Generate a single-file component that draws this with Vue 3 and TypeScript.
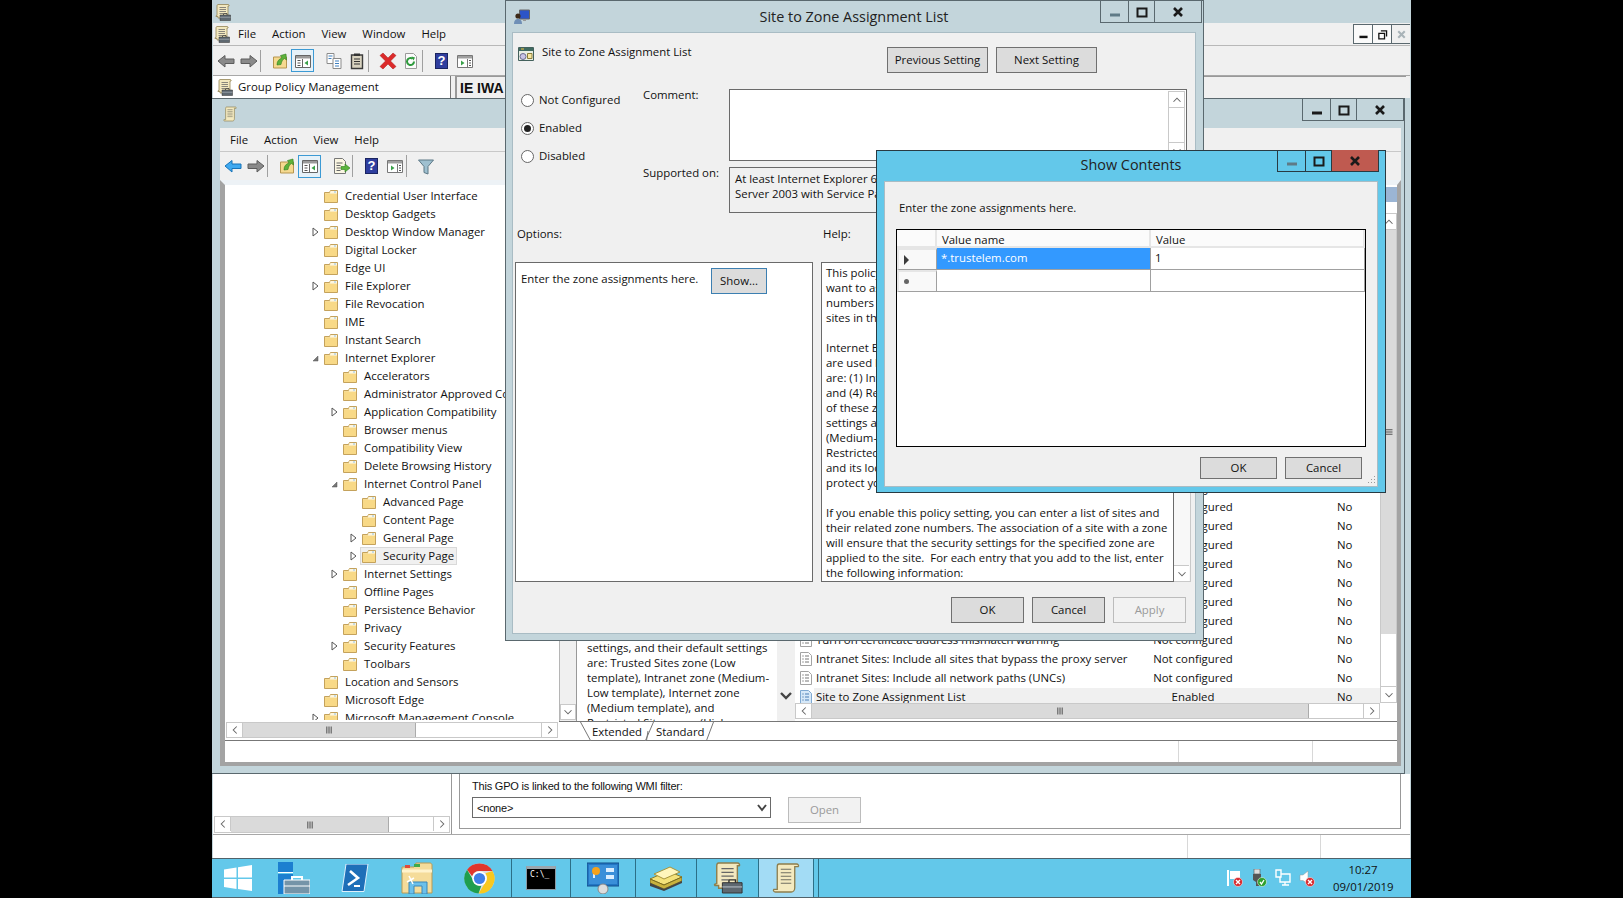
<script setup lang="ts">
interface TreeRow {
  label: string
  level: number
  state?: 'closed' | 'open'
  selected?: boolean
}
interface Tool {
  icon?: string
  on?: boolean
  spaced?: boolean
}
interface ListRow {
  name: string
  state: string
  comment: string
  selected?: boolean
}
interface TaskItem {
  icon: string
  width: number
  framed?: boolean
  active?: boolean
}

const tree: TreeRow[] = [
  { label: 'Credential User Interface', level: 1 },
  { label: 'Desktop Gadgets', level: 1 },
  { label: 'Desktop Window Manager', level: 1, state: 'closed' },
  { label: 'Digital Locker', level: 1 },
  { label: 'Edge UI', level: 1 },
  { label: 'File Explorer', level: 1, state: 'closed' },
  { label: 'File Revocation', level: 1 },
  { label: 'IME', level: 1 },
  { label: 'Instant Search', level: 1 },
  { label: 'Internet Explorer', level: 1, state: 'open' },
  { label: 'Accelerators', level: 2 },
  { label: 'Administrator Approved Controls', level: 2 },
  { label: 'Application Compatibility', level: 2, state: 'closed' },
  { label: 'Browser menus', level: 2 },
  { label: 'Compatibility View', level: 2 },
  { label: 'Delete Browsing History', level: 2 },
  { label: 'Internet Control Panel', level: 2, state: 'open' },
  { label: 'Advanced Page', level: 3 },
  { label: 'Content Page', level: 3 },
  { label: 'General Page', level: 3, state: 'closed' },
  { label: 'Security Page', level: 3, state: 'closed', selected: true },
  { label: 'Internet Settings', level: 2, state: 'closed' },
  { label: 'Offline Pages', level: 2 },
  { label: 'Persistence Behavior', level: 2 },
  { label: 'Privacy', level: 2 },
  { label: 'Security Features', level: 2, state: 'closed' },
  { label: 'Toolbars', level: 2 },
  { label: 'Location and Sensors', level: 1 },
  { label: 'Microsoft Edge', level: 1 },
  { label: 'Microsoft Management Console', level: 1, state: 'closed' },
]

const outerTools: Tool[] = [
  { icon: 'back' }, { icon: 'fwd' }, {},
  { icon: 'up' }, { icon: 'pane', on: true },
  { icon: 'copy', spaced: true }, { icon: 'paste' }, {},
  { icon: 'del' }, { icon: 'refresh' }, {},
  { icon: 'help' }, { icon: 'props' },
]
const editorTools: Tool[] = [
  { icon: 'back-on' }, { icon: 'fwd' }, {},
  { icon: 'up' }, { icon: 'pane', on: true },
  { icon: 'export', spaced: true }, {},
  { icon: 'help' }, { icon: 'props' }, {},
  { icon: 'filter' },
]

const descLines = [
  'settings, and their default settings',
  'are: Trusted Sites zone (Low',
  'template), Intranet zone (Medium-',
  'Low template), Internet zone',
  '(Medium template), and',
  'Restricted Sites zone (High',
]

const helpLines = [
  'This policy setting allows you to manage a list of sites that you',
  'want to associate with a particular security zone. These zone',
  'numbers have associated security settings that apply to all of the',
  'sites in the zone.',
  '',
  'Internet Explorer has 4 security zones, numbered 1-4, and these',
  'are used by this policy setting to associate sites to zones. They',
  'are: (1) Intranet zone, (2) Trusted Sites zone, (3) Internet zone,',
  'and (4) Restricted Sites zone. Security settings can be set for each',
  'of these zones through other policy settings, and their default',
  'settings are: Trusted Sites zone (Low template), Intranet zone',
  '(Medium-Low template), Internet zone (Medium template), and',
  'Restricted Sites zone (High template). (The Local Machine zone',
  'and its locked down equivalent have special security settings that',
  'protect your local computer.)',
  '',
  'If you enable this policy setting, you can enter a list of sites and',
  'their related zone numbers. The association of a site with a zone',
  'will ensure that the security settings for the specified zone are',
  'applied to the site.  For each entry that you add to the list, enter',
  'the following information:',
]

const notConfigured = (name = ''): ListRow => ({ name, state: 'Not configured', comment: 'No' })
const listRows: ListRow[] = [
  ...Array.from({ length: 14 }, () => ({ name: '', state: '', comment: '' })),
  ...Array.from({ length: 8 }, () => notConfigured()),
  notConfigured('Turn on certificate address mismatch warning'),
  notConfigured('Intranet Sites: Include all sites that bypass the proxy server'),
  notConfigured('Intranet Sites: Include all network paths (UNCs)'),
  { name: 'Site to Zone Assignment List', state: 'Enabled', comment: 'No', selected: true },
]

const taskItems: TaskItem[] = [
  { icon: 'start', width: 51 },
  { icon: 'server', width: 61 },
  { icon: 'ps', width: 62 },
  { icon: 'explorer', width: 62 },
  { icon: 'chrome', width: 63 },
  { icon: 'cmd', width: 59, framed: true },
  { icon: 'cpanel', width: 65, framed: true },
  { icon: 'books', width: 61, framed: true },
  { icon: 'gpm', width: 62, framed: true },
  { icon: 'script', width: 56, framed: true, active: true },
]
</script>

<template>
  <svg class="defs" aria-hidden="true">
    <symbol id="chev-l" viewBox="0 0 16 16"><path d="M10 4 6 8l4 4" fill="none" stroke="#666" stroke-width="1.2" /></symbol>
    <symbol id="chev-r" viewBox="0 0 16 16"><path d="m6 4 4 4-4 4" fill="none" stroke="#666" stroke-width="1.2" /></symbol>
    <symbol id="chev-u" viewBox="0 0 16 16"><path d="m4 10 4-4 4 4" fill="none" stroke="#666" stroke-width="1.2" /></symbol>
    <symbol id="chev-d" viewBox="0 0 16 16"><path d="m4 6 4 4 4-4" fill="none" stroke="#666" stroke-width="1.2" /></symbol>
    <symbol id="grip-h" viewBox="0 0 16 16"><path d="M5.500 4v8M8 4v8M10.500 4v8" stroke="#555" stroke-width="1.2" /></symbol>
    <symbol id="grip-v" viewBox="0 0 16 16"><path d="M4 5.500h8M4 8h8M4 10.500h8" stroke="#555" stroke-width="1.2" /></symbol>

    <symbol id="folder" viewBox="0 0 14 13">
      <path d="M.5 2.500h5l1-2h7v12H.5z" fill="#f7dc96" stroke="#c4a25c" />
      <path d="M6.500 1h6.500v2.500H6z" fill="#fdf6e0" />
      <path d="M10 1.600h2v1h-2z" fill="#8fc1e8" />
      <path d="M1 4h12v8H1z" fill="#f8d987" />
    </symbol>
    <symbol id="doc" viewBox="0 0 12 14">
      <path d="M.5.5h8l3 3v10H.5z" fill="#fff" stroke="#a3a3a3" />
      <path d="M2.500 4h1M2.500 7h1M2.500 10h1" stroke="#444" />
      <path d="M5 4h4M5 7h4M5 10h4" stroke="#777" />
    </symbol>
    <symbol id="doc-on" viewBox="0 0 12 14">
      <path d="M.5.5h8l3 3v10H.5z" fill="#d6e8f8" stroke="#7fa9d2" />
      <path d="M2.500 4h1M2.500 7h1M2.500 10h1" stroke="#2a5d94" />
      <path d="M5 4h4M5 7h4M5 10h4" stroke="#4a7fb6" />
    </symbol>

    <symbol id="back" viewBox="0 0 20 20"><path d="M2 10 9 4.500v3.500h9v4.500H9V16z" fill="#8a8a8a" stroke="#5c5c5c" /></symbol>
    <symbol id="back-on" viewBox="0 0 20 20"><path d="M2 10 9 4.500v3.500h9v4.500H9V16z" fill="#3fa9f0" stroke="#1773b8" /></symbol>
    <symbol id="fwd" viewBox="0 0 20 20"><path d="m18 10-7-5.500v3.500H2v4.500h9V16z" fill="#8a8a8a" stroke="#5c5c5c" /></symbol>
    <symbol id="up" viewBox="0 0 20 20">
      <path d="M3.500 6h13v11h-13z" fill="#f6d98f" stroke="#b6954f" />
      <path d="M7 14c0-4 2-6 5-7l-1.500-2.500L16 3l.5 6-2-1.500c-2 1-3 3-3.500 6z" fill="#5fb23a" stroke="#2f7d1f" stroke-width=".6" />
    </symbol>
    <symbol id="pane" viewBox="0 0 20 20">
      <path d="M2.500 4.500h15v12h-15z" fill="#fff" stroke="#666" />
      <path d="M3 5h14v2.500H3z" fill="#9a9a9a" />
      <path d="M9.500 8v8" stroke="#666" />
      <path d="M4.500 9.500h3M4.500 12h3M4.500 14.500h3" stroke="#555" />
      <path d="m15 9.500-3.500 2.500 3.500 2.500z" fill="#3aa04a" />
    </symbol>
    <symbol id="copy" viewBox="0 0 20 20">
      <path d="M3 2.500h7v10H3z" fill="#fff" stroke="#8b8b8b" />
      <path d="M9 7.500h8v10H9z" fill="#fff" stroke="#8b8b8b" />
      <path d="M11 10h4M11 12.500h4M11 15h4" stroke="#3d7fbf" />
      <path d="M4.500 5h4M4.500 7.500h3" stroke="#3d7fbf" />
    </symbol>
    <symbol id="paste" viewBox="0 0 20 20">
      <path d="M4.500 4h11v13.500h-11z" fill="#d9d3c0" stroke="#3c3c3c" stroke-width="1.400" />
      <path d="M7 2.500h6V5H7z" fill="#333" />
      <path d="M7 8h6M7 10.500h6M7 13h6" stroke="#333" stroke-width="1.200" />
    </symbol>
    <symbol id="del" viewBox="0 0 20 20"><path d="M2 4.500 5 2l5 5 5-5 3 2.500L12.500 10l5.500 5.500L15 18l-5-5-5 5-3-2.500L7.500 10z" fill="#dc2a2a" stroke="#a81818" stroke-width=".5" /></symbol>
    <symbol id="refresh" viewBox="0 0 20 20">
      <path d="M4.500 2.500h8l3 3v12h-11z" fill="#fbfbfb" stroke="#9a9a9a" />
      <path d="M13 10.500a3.500 3.500 0 1 1-1.300-2.700" fill="none" stroke="#2d9a3c" stroke-width="2" />
      <path d="m10.500 5.500 3.500 1-1.500 3z" fill="#2d9a3c" />
    </symbol>
    <symbol id="props" viewBox="0 0 20 20">
      <path d="M2.500 4.500h15v12h-15z" fill="#fff" stroke="#777" />
      <path d="M3 5h14v2.500H3z" fill="#a0a0a0" />
      <path d="M12.500 8v8" stroke="#777" />
      <path d="M14 9.500h2M14 12h2M14 14.500h2" stroke="#555" />
      <path d="m6 9.500 3.500 2.500L6 14.500z" fill="#3aa04a" />
    </symbol>
    <symbol id="export" viewBox="0 0 20 20">
      <path d="M3.500 2.500h8l3 3v12h-11z" fill="#fbf6e2" stroke="#777" />
      <path d="M5.500 7h6M5.500 9.500h4M5.500 12h4M5.500 14.500h4" stroke="#666" />
      <path d="M10 10.500h4V8l5 4-5 4v-2.500h-4z" fill="#5cb53c" stroke="#2f7d1f" stroke-width=".6" />
    </symbol>
    <symbol id="filter" viewBox="0 0 20 20"><path d="M2.500 4h15L12 10.500V18l-4-1.500v-6z" fill="#9fc0d0" stroke="#5d7886" /></symbol>

    <symbol id="gpm" viewBox="0 0 32 34">
      <path d="M6 1h20c2 0 3 2 2 3h-2v24H6v-3H2c-1-1 0-2 2-2V4c0-2 1-3 2-3z" fill="#f2e8bf" stroke="#8d7e4c" stroke-width="1.500" />
      <path d="M9 7h13M9 11h13M9 15h13M9 19h7" stroke="#666" stroke-width="1.500" />
      <path d="M10 22h21v11H10z" fill="#5e6870" stroke="#2f2f2f" />
      <path d="M17 22v-3h7v3" fill="none" stroke="#2f2f2f" stroke-width="1.500" />
      <path d="M10 26.500h21" stroke="#a0a9b0" stroke-width="1.500" />
    </symbol>
    <symbol id="script" viewBox="0 0 32 36">
      <path d="M8 2h20c2 0 3 2 2 3h-4v24c0 3-2 5-4 5H4c-2 0-3-2-2-3h4V5C6 3 7 2 8 2z" fill="#f4eac0" stroke="#8d7e4c" stroke-width="1.500" />
      <path d="M10 8h12M10 12h12M10 16h12M10 20h12M10 24h12" stroke="#6f6f62" stroke-width="1.300" />
    </symbol>
    <symbol id="policy" viewBox="0 0 16 16">
      <path d="M.5 1.500h15v13H.5z" fill="#e8efe4" stroke="#44615c" />
      <path d="M1 2h14v3H1z" fill="#3f6a60" />
      <path d="M3 3h3" stroke="#f0c040" />
      <circle cx="5" cy="10.500" r="3" fill="#c9c4e6" stroke="#6b6b8e" />
      <path d="M9.500 7.500h4.500v5H9.500z" fill="#f6e7a0" stroke="#8b7c3a" />
    </symbol>
    <symbol id="dlg" viewBox="0 0 16 16">
      <path d="M5.500 1h10v9h-10z" fill="#2c54c8" stroke="#666" />
      <path d="M9 10h3v2H9z" fill="#999" />
      <circle cx="4" cy="7" r="2.600" fill="#3e2a18" />
      <path d="M0 15c0-4 2-5 4-5s4 1 4 5z" fill="#6f8fb6" />
    </symbol>

    <symbol id="start" viewBox="0 0 28 26"><path d="M0 4.500 12.500 2.500v10H0zM14 2.300 28 0v12.500H14zM0 14h12.500v10L0 22zM14 14h14v12l-14-2z" fill="#fff" /></symbol>
    <symbol id="server" viewBox="0 0 32 32">
      <path d="M0 0h15v10H0zM0 12h15v20H0z" fill="#1c7fd0" />
      <path d="M0 10.500h15" stroke="#fff" />
      <path d="M6 18h26v14H6z" fill="#7594a8" stroke="#fff" />
      <path d="M14 18v-3h10v3" fill="none" stroke="#fff" stroke-width="2" />
      <path d="M6 24h26" stroke="#fff" />
    </symbol>
    <symbol id="ps" viewBox="0 0 28 28">
      <path d="M5 0h22l-4 27.500H1z" fill="#1e6fb8" stroke="#dff0fb" />
      <path d="m9 7 8 7-10 7" fill="none" stroke="#fff" stroke-width="2.600" />
      <path d="M13 22h6" stroke="#fff" stroke-width="2" />
    </symbol>
    <symbol id="explorer" viewBox="0 0 32 32">
      <path d="M1 5h12l2-4h14c1 0 2 1 2 2v28H1z" fill="#f5dc9a" stroke="#b89a55" />
      <path d="M4 3h5v3H4z" fill="#e04a3a" /><path d="M13 2h6v3h-6z" fill="#3eaa4a" />
      <path d="M1 9h30" stroke="#fff3cc" stroke-width="3" />
      <path d="M8 32V20h18v12h-5V24h-8v8z" fill="#6cc0ea" stroke="#3a86b6" />
      <path d="M8 14 12 22M6 20l7-4" stroke="#fff" stroke-width="1.500" />
    </symbol>
    <symbol id="chrome" viewBox="0 0 32 32">
      <circle cx="16" cy="16" r="15.500" fill="#ddd" />
      <path d="M16 .5a15.500 15.500 0 0 1 13.400 7.700H16a8 8 0 0 0-7.600 5.400L3.200 7A15.500 15.500 0 0 1 16 .5z" fill="#e0362c" />
      <path d="M29.400 8.200A15.500 15.500 0 0 1 15 31.500l6.700-10.900a8 8 0 0 0 .3-10.100z" fill="#f8c81e" />
      <path d="M15 31.500A15.500 15.500 0 0 1 3.200 7l6.500 11a8 8 0 0 0 8.200 5.500z" fill="#1f9e4e" />
      <circle cx="16" cy="16" r="7.500" fill="#fff" />
      <circle cx="16" cy="16" r="5.800" fill="#3f7fe8" />
    </symbol>
    <symbol id="cpanel" viewBox="0 0 32 32">
      <path d="M0 1h32v23H0z" fill="#2276c4" stroke="#124f8c" />
      <path d="M2 3h28v19H2z" fill="#3a8fd9" />
      <path d="M19 6h8v4h-8zM19 13h8v4h-8zM6 12h2v4H6z" fill="#dbeeff" />
      <circle cx="9" cy="9" r="4" fill="#f4a21c" />
      <circle cx="16" cy="27" r="5" fill="#ddd" stroke="#888" />
    </symbol>
    <symbol id="books" viewBox="0 0 32 26">
      <path d="M0 14 18 6l14 6-18 8z" fill="#f4e27a" stroke="#8d7c2a" />
      <path d="M0 14v4l14 6 18-8v-4L14 20z" fill="#c9b23e" stroke="#7a6a1e" />
      <path d="M4 9 20 2l10 5-16 7z" fill="#fff6bc" stroke="#a6943c" />
      <path d="M0 18v3l14 5 18-8v-2l-18 8z" fill="#444" />
    </symbol>

    <symbol id="flag" viewBox="0 0 16 18">
      <path d="M1 1v16" stroke="#fff" stroke-width="2" />
      <path d="M3 2h10v8H3z" fill="#fff" />
      <circle cx="11" cy="13" r="4.500" fill="#d8282c" stroke="#fff" stroke-width=".5" />
      <path d="m9 11 4 4m0-4-4 4" stroke="#fff" stroke-width="1.400" />
    </symbol>
    <symbol id="usb" viewBox="0 0 16 18">
      <path d="M3 0h6v5H3z" fill="#ddd" stroke="#555" stroke-width=".6" />
      <path d="M2 5h8v6l-2 2v4H5v-4l-3-2z" fill="#555" />
      <circle cx="11" cy="13" r="4.500" fill="#2ea02e" stroke="#fff" stroke-width=".5" />
      <path d="m9 13 1.500 2 2.500-4" fill="none" stroke="#fff" stroke-width="1.300" />
    </symbol>
    <symbol id="net" viewBox="0 0 16 18">
      <path d="M5 5h10v8H5z" fill="none" stroke="#fff" stroke-width="1.400" />
      <path d="M1 1h5v7H1z" fill="#5ec4e6" stroke="#fff" stroke-width="1.400" />
      <path d="M10 13v3M7 16h7" stroke="#fff" stroke-width="1.400" />
    </symbol>
    <symbol id="sound" viewBox="0 0 16 18">
      <path d="M1 6h3l5-4v13l-5-3.500H1z" fill="#fff" stroke="#999" stroke-width=".5" />
      <circle cx="11" cy="13" r="4.500" fill="#d8282c" stroke="#fff" stroke-width=".5" />
      <path d="m9 11 4 4m0-4-4 4" stroke="#fff" stroke-width="1.400" />
    </symbol>

    <symbol id="cap-min" viewBox="0 0 16 16"><path d="M3 11h10" stroke="currentColor" stroke-width="3" /></symbol>
    <symbol id="cap-max" viewBox="0 0 16 16"><path d="M3.500 4.500h9v8h-9z" fill="none" stroke="currentColor" stroke-width="2" /></symbol>
    <symbol id="cap-res" viewBox="0 0 16 16"><path d="M3.500 6.500h7v7h-7zM6 3.500h7v7" fill="none" stroke="currentColor" stroke-width="1.600" /></symbol>
    <symbol id="cap-x" viewBox="0 0 16 16"><path d="m4 4 8 8m0-8-8 8" stroke="currentColor" stroke-width="2.600" /></symbol>
  </svg>

  <div class="screen">
    <div class="desk">
      <div class="gpmc">
        <div class="gpmc-title">
          <svg class="ic15"><use href="#gpm" /></svg>
          <div class="caption cap-gpmc">
            <span class="cap-btn w28"><svg><use href="#cap-min" /></svg></span>
            <span class="cap-btn w26"><svg><use href="#cap-res" /></svg></span>
            <span class="cap-btn w47"><svg><use href="#cap-x" /></svg></span>
          </div>
        </div>

        <div class="menubar outer-menu">
          <svg class="ic15"><use href="#gpm" /></svg>
          <span>File</span><span>Action</span><span>View</span><span>Window</span><span>Help</span>
          <div class="mini-caption">
            <span class="mini"><svg><use href="#cap-min" /></svg></span>
            <span class="mini"><svg><use href="#cap-res" /></svg></span>
            <span class="mini off"><svg><use href="#cap-x" /></svg></span>
          </div>
        </div>

        <div class="toolbar">
          <template v-for="(t, i) in outerTools" :key="i">
            <span v-if="t.icon === 'help'" class="tool"><b class="help-ic">?</b></span>
            <span v-else-if="t.icon" class="tool" :class="{ on: t.on, spaced: t.spaced }"><svg><use :href="`#${t.icon}`" /></svg></span>
            <i v-else class="sep" />
          </template>
        </div>

        <div class="address">
          <div class="addr-tab">
            <svg class="ic15"><use href="#gpm" /></svg>
            <span>Group Policy Management</span>
          </div>
          <div class="addr-gpo"><b>IE IWA</b></div>
        </div>

        <div class="editor">
          <div class="editor-title">
            <svg class="ed-icon"><use href="#script" /></svg>
            <div class="caption">
              <span class="cap-btn w28"><svg><use href="#cap-min" /></svg></span>
              <span class="cap-btn w26"><svg><use href="#cap-max" /></svg></span>
              <span class="cap-btn w46"><svg><use href="#cap-x" /></svg></span>
            </div>
          </div>
          <div class="editor-inner">
            <div class="menubar editor-menu">
              <span>File</span><span>Action</span><span>View</span><span>Help</span>
            </div>
            <div class="toolbar editor-tools">
              <template v-for="(t, i) in editorTools" :key="i">
                <span v-if="t.icon === 'help'" class="tool"><b class="help-ic">?</b></span>
                <span v-else-if="t.icon" class="tool" :class="{ on: t.on, spaced: t.spaced }"><svg><use :href="`#${t.icon}`" /></svg></span>
                <i v-else class="sep" />
              </template>
            </div>

            <div class="mmc">
              <div class="mmc-top">
                <div class="tree-pane">
                  <div class="tree">
                    <div
                      v-for="row in tree"
                      :key="row.label"
                      class="tree-row"
                      :style="{ paddingLeft: 85 + (row.level - 1) * 19 + 'px' }"
                    >
                      <span class="twist">
                        <svg v-if="row.state === 'closed'" width="7" height="10"><path d="M1 1v8l5-4z" fill="#fff" stroke="#555" /></svg>
                        <svg v-else-if="row.state === 'open'" width="7" height="7"><path d="M6 1v5H1z" fill="#777" stroke="#555" stroke-width=".5" /></svg>
                      </span>
                      <span class="node" :class="{ sel: row.selected }">
                        <svg class="folder"><use href="#folder" /></svg>{{ row.label }}
                      </span>
                    </div>
                  </div>
                  <div class="hbar tree-hbar">
                    <span class="sb-btn"><svg><use href="#chev-l" /></svg></span>
                    <span class="thumb t-tree"><svg><use href="#grip-h" /></svg></span>
                    <span class="track" />
                    <span class="sb-btn"><svg><use href="#chev-r" /></svg></span>
                  </div>
                </div>

                <div class="right-pane">
                  <div class="panes">
                    <div class="tree-vbar">
                      <span class="sb-btn"><svg><use href="#chev-d" /></svg></span>
                    </div>
                    <div class="gutter" />
                    <div class="desc">
                      <div class="desc-text">
                        <div v-for="l in descLines" :key="l">{{ l }}</div>
                      </div>
                    </div>
                    <div class="chev-col">
                      <svg width="12" height="10"><path d="m1 2 5 5 5-5" fill="none" stroke="#444" stroke-width="2.400" /></svg>
                    </div>
                    <div class="list">
                      <div class="banner" />
                      <div class="list-head" />
                      <div class="list-body">
                        <div class="rows">
                          <div v-for="(r, i) in listRows" :key="i" class="row" :class="{ sel: r.selected }">
                            <svg v-if="r.name" class="doc"><use :href="r.selected ? '#doc-on' : '#doc'" /></svg>
                            <i v-else />
                            <span>{{ r.name }}</span>
                            <span class="r-state">{{ r.state }}</span>
                            <i />
                            <span>{{ r.comment }}</span>
                          </div>
                        </div>
                        <div class="vbar">
                          <span class="sb-btn"><svg><use href="#chev-u" /></svg></span>
                          <span class="thumb t-list"><svg><use href="#grip-v" /></svg></span>
                          <span class="track" />
                          <span class="sb-btn"><svg><use href="#chev-d" /></svg></span>
                        </div>
                      </div>
                      <div class="hbar list-hbar">
                        <span class="sb-btn"><svg><use href="#chev-l" /></svg></span>
                        <span class="thumb t-lh"><svg><use href="#grip-h" /></svg></span>
                        <span class="track" />
                        <span class="sb-btn"><svg><use href="#chev-r" /></svg></span>
                      </div>
                    </div>
                  </div>
                  <div class="tabs">
                    <svg class="tab-lines" width="150" height="20">
                      <path d="M5.500 0 15.500 18.500H70.500L78.500 0" fill="#fff" stroke="#777" />
                      <path d="M73 9 71.500 18.500H131.500L138.500 0" fill="none" stroke="#777" />
                    </svg>
                    <span class="tab active">Extended</span>
                    <span class="tab">Standard</span>
                  </div>
                </div>
              </div>
              <div class="mmc-status">
                <i class="st1" /><i class="st2" />
              </div>
            </div>
          </div>
        </div>

        <div class="lower">
          <div class="lower-left">
            <div class="hbar lower-hbar">
              <span class="sb-btn"><svg><use href="#chev-l" /></svg></span>
              <span class="thumb t-low"><svg><use href="#grip-h" /></svg></span>
              <span class="track" />
              <span class="sb-btn"><svg><use href="#chev-r" /></svg></span>
            </div>
          </div>
          <div class="lower-right">
            <div class="wmi-label">This GPO is linked to the following WMI filter:</div>
            <div class="wmi-row">
              <div class="select">
                <span>&lt;none&gt;</span>
                <svg width="12" height="12"><path d="m2 3 4 5 4-5" fill="none" stroke="#444" stroke-width="2" /></svg>
              </div>
              <button class="btn disabled open-btn">Open</button>
            </div>
          </div>
        </div>
        <div class="gpmc-status">
          <i class="gs1" /><i class="gs2" />
        </div>
      </div>

      <div class="taskbar">
        <span
          v-for="t in taskItems"
          :key="t.icon"
          class="task"
          :class="{ framed: t.framed, active: t.active }"
          :style="{ width: t.width + 'px' }"
        >
          <span v-if="t.icon === 'cmd'" class="cmd-ic">C:\_</span>
          <svg v-else :class="`tb-${t.icon}`"><use :href="`#${t.icon}`" /></svg>
        </span>
        <i class="task-sliver" />
        <div class="tray">
          <svg><use href="#flag" /></svg>
          <svg><use href="#usb" /></svg>
          <svg><use href="#net" /></svg>
          <svg><use href="#sound" /></svg>
        </div>
        <div class="clock">
          <div>10:27</div>
          <div>09/01/2019</div>
        </div>
      </div>
    </div>

    <!-- policy dialog -->
    <div class="dialog site">
      <div class="dlg-title">
        <svg class="dlg-icon"><use href="#dlg" /></svg>
        <span>Site to Zone Assignment List</span>
        <div class="caption cap-dlg">
          <span class="cap-btn w28 dim"><svg><use href="#cap-min" /></svg></span>
          <span class="cap-btn w26"><svg><use href="#cap-max" /></svg></span>
          <span class="cap-btn w46"><svg><use href="#cap-x" /></svg></span>
        </div>
      </div>
      <div class="dlg-body">
        <div class="site-head">
          <svg class="policy-ic"><use href="#policy" /></svg>
          <span class="site-name">Site to Zone Assignment List</span>
          <div class="head-btns">
            <button class="btn w101">Previous Setting</button>
            <button class="btn w101">Next Setting</button>
          </div>
        </div>

        <div class="site-mid">
          <div class="radios">
            <label class="radio"><i />Not Configured</label>
            <label class="radio on"><i />Enabled</label>
            <label class="radio"><i />Disabled</label>
          </div>
          <span class="f-label">Comment:</span>
          <div class="box comment">
            <div class="vbar">
              <span class="sb-btn"><svg><use href="#chev-u" /></svg></span>
              <span class="track" />
              <span class="sb-btn"><svg><use href="#chev-d" /></svg></span>
            </div>
          </div>
          <span class="f-label">Supported on:</span>
          <div class="box supported">
            At least Internet Explorer 6.0 in Windows XP with Service Pack 2 or Windows<br />
            Server 2003 with Service Pack 1
          </div>
        </div>

        <div class="site-labels"><span>Options:</span><span>Help:</span></div>

        <div class="site-panels">
          <div class="box options">
            <span>Enter the zone assignments here.</span>
            <button class="btn focus show-btn">Show...</button>
          </div>
          <div class="box help-text">
            <div v-for="(l, i) in helpLines" :key="i" class="hl">{{ l }}</div>
          </div>
          <div class="vbar help-bar">
            <span class="track" />
            <span class="sb-btn"><svg><use href="#chev-d" /></svg></span>
          </div>
        </div>

        <div class="site-foot">
          <button class="btn w73">OK</button>
          <button class="btn w73">Cancel</button>
          <button class="btn w73 disabled">Apply</button>
        </div>
      </div>
    </div>

    <!-- show contents dialog -->
    <div class="dialog contents">
      <div class="dlg-title">
        <span>Show Contents</span>
        <div class="caption cap-cont">
          <span class="cap-btn w28 dim"><svg><use href="#cap-min" /></svg></span>
          <span class="cap-btn w26"><svg><use href="#cap-max" /></svg></span>
          <span class="cap-btn w46 red"><svg><use href="#cap-x" /></svg></span>
        </div>
      </div>
      <div class="dlg-body cont-body">
        <div class="cont-label">Enter the zone assignments here.</div>
        <div class="grid">
          <div class="gh corner" />
          <div class="gh">Value name</div>
          <div class="gh">Value</div>
          <div class="rh"><svg width="6" height="10"><path d="M0 0v10l5-5z" fill="#3c3c3c" /></svg></div>
          <div class="gc on">*.trustelem.com</div>
          <div class="gc">1</div>
          <div class="rh"><span class="star" /></div>
          <div class="gc" />
          <div class="gc" />
        </div>
        <div class="cont-foot">
          <button class="btn w77">OK</button>
          <button class="btn w77">Cancel</button>
        </div>
        <svg class="size-grip" width="10" height="10"><path d="M8 1h1v1H8zM5 4h1v1H5zM8 4h1v1H8zM2 7h1v1H2zM5 7h1v1H5zM8 7h1v1H8z" fill="#999" /></svg>
      </div>
    </div>
  </div>
</template>

<style>
html,
body {
  margin: 0;
  background: #000;
}
</style>

<style scoped>
.defs {
  position: absolute;
  width: 0;
  height: 0;
}
.screen {
  position: relative;
  width: 1623px;
  height: 898px;
  overflow: hidden;
  background: #000;
  color: #111;
  font: 11.4px/16px "Open Sans", "Noto Sans", sans-serif;
}
.desk {
  display: flex;
  flex-direction: column;
  width: 1199px;
  height: 898px;
  margin-left: 212px;
}
.gpmc {
  display: flex;
  flex-direction: column;
  height: 858px;
  padding: 0 1px;
  background: #c3d5db;
}
.gpmc-title {
  display: flex;
  height: 23px;
  padding: 4px 0 0 2px;
  box-sizing: border-box;
}
.ic15 {
  width: 16px;
  height: 17px;
  flex: none;
}
.caption {
  display: flex;
  position: absolute;
  top: 0;
  right: 0;
  border: 1px solid #5a686e;
  border-top: 0;
  color: #1a1a1a;
}
.cap-btn {
  display: flex;
  align-items: center;
  justify-content: center;
  height: 21px;
  border-right: 1px solid #5a686e;
  box-sizing: border-box;
}
.cap-btn:last-child {
  border-right: 0;
}
.cap-btn svg {
  width: 16px;
  height: 16px;
}
.cap-btn.dim {
  color: #5f7a86;
}
.cap-btn.red {
  background: #bf5a50;
}
.w28 { width: 28px; }
.w26 { width: 26px; }
.w46 { width: 46px; }
.w47 { width: 47px; }
.cap-gpmc {
  left: 1096px;
  right: auto;
}
.cap-gpmc .cap-btn {
  height: 19px;
}

.menubar {
  display: flex;
  align-items: center;
  gap: 16px;
  box-sizing: border-box;
  background: #f0f0f0;
}
.outer-menu {
  position: relative;
  height: 23px;
  padding-left: 25px;
  border-bottom: 1px solid #b8b8b8;
}
.outer-menu .ic15 {
  position: absolute;
  left: 1px;
  top: 3px;
}
.mini-caption {
  display: flex;
  position: absolute;
  top: 1px;
  right: 0;
  border: 1px solid #5a686e;
  border-right: 0;
  background: #fafafa;
}
.mini {
  display: flex;
  align-items: center;
  justify-content: center;
  width: 18px;
  height: 18px;
  border-right: 1px solid #5a686e;
}
.mini svg {
  width: 13px;
  height: 13px;
}
.mini.off {
  border-right: 0;
  color: #a9b3b8;
  background: #f0f0f0;
}

.toolbar {
  display: flex;
  align-items: center;
  height: 29px;
  padding-left: 1px;
  box-sizing: border-box;
  background: #f0f0f0;
}
.tool {
  display: flex;
  align-items: center;
  justify-content: center;
  width: 23px;
  height: 23px;
  box-sizing: border-box;
}
.tool svg {
  width: 20px;
  height: 20px;
}
.tool.on {
  border: 1px solid #3c9ad4;
  background: #e6f1f8;
}
.tool.spaced {
  margin-left: 8px;
}
.help-ic {
  display: block;
  width: 13px;
  height: 16px;
  box-sizing: border-box;
  border: 1px solid #1a2460;
  background: #2f3e9e;
  color: #fff;
  text-align: center;
  font: 700 13px/14px "Liberation Sans", sans-serif;
}
.sep {
  width: 1px;
  height: 22px;
  margin-right: 7px;
  background: #a0a0a0;
}

.address {
  display: flex;
  height: 23px;
  background: #f0f0f0;
  border-top: 1px solid #a8a8a8;
  box-sizing: border-box;
}
.addr-tab {
  display: flex;
  align-items: center;
  gap: 5px;
  width: 238px;
  padding-left: 4px;
  box-sizing: border-box;
  background: #fff;
  border-right: 1px solid #777;
}
.addr-gpo {
  flex: 1;
  margin-left: 4px;
  margin-right: 4px;
  padding-left: 3px;
  border-left: 2px solid #999;
  border-top: 1px solid #999;
  font: 700 14px/23px "Liberation Sans", sans-serif;
}
.addr-gpo b {
  color: #111;
}

.editor {
  display: flex;
  flex-direction: column;
  position: relative;
  width: 1193px;
  height: 676px;
  margin-left: -1px;
  box-sizing: border-box;
  border: 1px solid #5a686e;
  border-left: 0;
}
.editor-title {
  height: 29px;
  padding: 7px 0 0 11px;
  box-sizing: border-box;
}
.ed-icon {
  width: 14px;
  height: 16px;
}
.editor-inner {
  display: flex;
  flex-direction: column;
  margin: 0 3px 0 8px;
}
.editor-menu {
  height: 24px;
  padding-left: 10px;
  border-bottom: 1px solid #c8c8c8;
}
.editor-tools {
  height: 28px;
}
.mmc {
  display: flex;
  flex-direction: column;
  height: 586px;
  box-sizing: border-box;
  border: 4px solid #a3a3a3;
  border-left-width: 5px;
  border-top: 5px solid #edf2f6;
  background: #fff;
}
.mmc-top {
  display: flex;
  height: 555px;
}
.mmc-status {
  display: flex;
  flex: 1;
  border-top: 1px solid #777;
}
.st1 {
  margin-left: 953px;
  border-left: 1px solid #d8d8d8;
}
.st2 {
  margin-left: 133px;
  border-left: 1px solid #d8d8d8;
}

.tree-pane {
  display: flex;
  flex-direction: column;
  width: 334px;
  flex: none;
}
.tree {
  height: 535px;
  margin-bottom: 2px;
  padding-top: 2px;
  box-sizing: border-box;
  overflow: hidden;
}
.tree-row {
  display: flex;
  align-items: center;
  height: 18px;
  white-space: nowrap;
}
.twist {
  display: flex;
  align-items: center;
  width: 12px;
  padding-left: 2px;
  box-sizing: border-box;
  flex: none;
}
.node {
  display: flex;
  align-items: center;
  height: 18px;
  padding: 0 3px 0 2px;
  box-sizing: border-box;
}
.node.sel {
  background: #f0f0f0;
  outline: 1px solid #d9d9d9;
  outline-offset: -1px;
}
.folder {
  width: 14px;
  height: 13px;
  margin-right: 7px;
}

.hbar {
  display: flex;
  height: 16px;
  background: #fff;
  border: 1px solid #c9c9c9;
  box-sizing: border-box;
}
.tree-hbar {
  width: 332px;
  height: 16px;
  margin-left: 1px;
}
.sb-btn {
  display: flex;
  align-items: center;
  justify-content: center;
  width: 16px;
  height: 16px;
  flex: none;
  background: #fff;
  box-sizing: border-box;
}
.hbar .sb-btn {
  height: 14px;
}
.sb-btn svg,
.thumb svg {
  width: 14px;
  height: 14px;
}
.hbar .sb-btn:first-child {
  border-right: 1px solid #c9c9c9;
}
.hbar .sb-btn:last-child {
  border-left: 1px solid #c9c9c9;
}
.thumb {
  display: flex;
  align-items: center;
  justify-content: center;
  background: #dadada;
  box-sizing: border-box;
}
.hbar .thumb {
  border-right: 1px solid #ababab;
}
.track {
  flex: 1;
}
.t-tree { width: 173px; }
.t-lh { width: 497px; }
.t-low { width: 158px; }
.t-list {
  height: 404px;
}
.vbar {
  display: flex;
  flex-direction: column;
  flex: none;
  width: 17px;
  background: #fff;
  box-sizing: border-box;
  border: 1px solid #c9c9c9;
}
.vbar .sb-btn {
  width: 15px;
}
.vbar .sb-btn:first-child {
  border-bottom: 1px solid #c9c9c9;
}
.vbar .sb-btn:last-child {
  border-top: 1px solid #c9c9c9;
}

.right-pane {
  display: flex;
  flex-direction: column;
  flex: 1;
  min-width: 0;
}
.panes {
  display: flex;
  height: 536px;
}
.tree-vbar {
  display: flex;
  flex-direction: column;
  justify-content: flex-end;
  width: 17px;
  padding-bottom: 1px;
  box-sizing: border-box;
  background: #f0f0f0;
  border-left: 1px solid #b5b5b5;
}
.tree-vbar .sb-btn {
  border: 1px solid #c9c9c9;
}
.gutter {
  width: 6px;
  border-left: 1px solid #999;
  box-sizing: border-box;
}
.desc {
  display: flex;
  flex-direction: column;
  justify-content: flex-end;
  width: 195px;
  padding-left: 5px;
  box-sizing: border-box;
  overflow: hidden;
  white-space: nowrap;
}
.desc-text {
  margin-bottom: -9px;
  line-height: 15px;
}
.chev-col {
  display: flex;
  align-items: flex-end;
  justify-content: center;
  width: 18px;
  padding-bottom: 20px;
  box-sizing: border-box;
  background: #f0f0f0;
}
.list {
  display: flex;
  flex-direction: column;
  flex: 1;
  min-width: 0;
}
.banner {
  height: 15px;
  margin-top: 2px;
  background: #9bb5d4;
}
.list-head {
  height: 11px;
}
.list-body {
  display: flex;
  height: 490px;
}
.rows {
  flex: 1;
  overflow: hidden;
}
.row {
  display: grid;
  grid-template-columns: 21px 300px 154px 67px 1fr;
  align-items: start;
  height: 19px;
  line-height: 17px;
  white-space: nowrap;
}
.row.sel {
  background: linear-gradient(90deg, #fff 19px, #f0f0f0 19px);
}
.r-state {
  text-align: center;
}
.doc {
  width: 12px;
  height: 14px;
  margin: 2px 0 0 5px;
}
.vbar .t-list {
  width: 15px;
}
.list-hbar {
  width: 585px;
}

.tabs {
  display: flex;
  position: relative;
  height: 19px;
  padding-left: 33px;
  border-top: 1px solid #777;
  box-sizing: border-box;
}
.tab-lines {
  position: absolute;
  left: 16px;
  top: 0;
}
.tab {
  position: relative;
  line-height: 19px;
  white-space: nowrap;
}
.tab.active {
  width: 64px;
}

.lower {
  display: flex;
  height: 61px;
  background: #fff;
  border-bottom: 1px solid #a8a8a8;
  box-sizing: border-box;
}
.lower-left {
  display: flex;
  align-items: flex-end;
  width: 239px;
  padding: 0 1px 1px;
  box-sizing: border-box;
  border-right: 1px solid #999;
}
.lower-hbar {
  width: 237px;
  height: 17px;
}
.lower-right {
  flex: none;
  width: 942px;
  height: 55px;
  margin-left: 7px;
  padding: 4px 0 0 12px;
  box-sizing: border-box;
  border: 1px solid #999;
  border-top: 0;
}
.wmi-label {
  font: 11px/16px "Liberation Sans", sans-serif;
  letter-spacing: -0.2px;
  color: #111;
}
.wmi-row {
  display: flex;
  gap: 17px;
  margin-top: 3px;
}
.select {
  display: flex;
  align-items: center;
  justify-content: space-between;
  width: 299px;
  height: 21px;
  padding: 0 2px 0 4px;
  box-sizing: border-box;
  border: 1px solid #6a6a6a;
  font: 11px "Liberation Sans", sans-serif;
  letter-spacing: -0.2px;
}
.open-btn {
  width: 73px;
  height: 21px;
  font: 11px "Liberation Sans", sans-serif;
}
.gpmc-status {
  display: flex;
  flex: 1;
  background: #fff;
}
.gs1 {
  margin-left: 974px;
  border-left: 1px solid #d8d8d8;
}
.gs2 {
  margin-left: 132px;
  border-left: 1px solid #d8d8d8;
}

.taskbar {
  display: flex;
  align-items: center;
  height: 40px;
  box-sizing: border-box;
  border-top: 1px solid #51626a;
  border-bottom: 1px solid #51626a;
  background: #63c8ea;
}
.task {
  display: flex;
  align-items: center;
  justify-content: center;
  height: 38px;
  flex: none;
  box-sizing: border-box;
}
.task.framed {
  border-left: 1px solid #2c6f87;
}
.task.active {
  background: #a3dcf5;
  border-right: 1px solid #2c6f87;
}
.task-sliver {
  width: 4px;
  height: 38px;
  border-right: 1px solid #2c6f87;
}
.tb-start { width: 28px; height: 26px; }
.tb-server { width: 32px; height: 32px; }
.tb-ps { width: 28px; height: 28px; }
.tb-explorer { width: 32px; height: 32px; }
.tb-chrome { width: 31px; height: 31px; }
.cmd-ic {
  width: 30px;
  height: 24px;
  padding-left: 3px;
  box-sizing: border-box;
  border: 1px solid #8a98a2;
  border-top: 3px solid #9aa5ad;
  background: #000;
  color: #fff;
  font: 8px/12px "DejaVu Sans Mono", monospace;
  white-space: nowrap;
  overflow: hidden;
}
.tb-cpanel { width: 32px; height: 32px; }
.tb-books { width: 32px; height: 26px; }
.tb-gpm { width: 30px; height: 34px; }
.tb-script { width: 28px; height: 32px; }
.tray {
  display: flex;
  gap: 8px;
  margin-left: auto;
  margin-right: 18px;
}
.tray svg {
  width: 16px;
  height: 18px;
}
.clock {
  width: 60px;
  margin-right: 18px;
  text-align: center;
  line-height: 17px;
  color: #111;
  white-space: nowrap;
}

.dialog {
  display: flex;
  flex-direction: column;
  position: absolute;
  box-sizing: border-box;
  border: 1px solid #5a686e;
}
.site {
  left: 505px;
  top: 0;
  width: 699px;
  height: 641px;
  padding: 0 7px 6px 6px;
  background: #c3d5db;
}
.contents {
  left: 876px;
  top: 150px;
  width: 510px;
  height: 343px;
  padding: 0 7px 5px 7px;
  border-color: #283a42;
  background: #63c8ea;
}
.dlg-title {
  position: relative;
  height: 31px;
  flex: none;
  text-align: center;
  font-size: 14.4px;
  line-height: 31px;
  color: #222;
}
.contents .dlg-title {
  height: 30px;
  line-height: 28px;
}
.dlg-icon {
  position: absolute;
  left: 2px;
  top: 8px;
  width: 16px;
  height: 16px;
}
.cap-dlg {
  right: -6px;
  top: 0;
}
.cap-cont {
  right: -1px;
  top: -1px;
  border-color: #283a42;
}
.cap-cont .cap-btn {
  border-color: #283a42;
}
.dlg-body {
  position: relative;
  flex: 1;
  background: #f0f0f0;
  border: 1px solid #a9bcc4;
  box-sizing: border-box;
}

.btn {
  display: block;
  height: 26px;
  padding: 0;
  border: 1px solid #707070;
  background: #dcdcdc;
  color: #111;
  font: inherit;
}
.btn.disabled {
  border-color: #bcbcbc;
  background: #f2f2f2;
  color: #9a9a9a;
}
.btn.focus {
  border-color: #3c7fb1;
}
.w101 { width: 101px; }
.w73 { width: 73px; }
.w77 { width: 77px; height: 22px; line-height: 18px; }

.site-head {
  display: flex;
  align-items: flex-start;
  padding: 14px 98px 0 5px;
}
.policy-ic {
  width: 16px;
  height: 16px;
  margin-top: -1px;
  flex: none;
}
.site-name {
  margin-left: 8px;
  margin-top: -3px;
}
.head-btns {
  display: flex;
  gap: 8px;
  margin-left: auto;
}
.site-mid {
  display: grid;
  grid-template-columns: 130px 86px 458px;
  grid-template-rows: 72px 46px;
  row-gap: 6px;
  margin-top: 16px;
}
.radios {
  display: flex;
  flex-direction: column;
  gap: 8px;
  grid-row: 1 / span 2;
  padding: 1px 0 0 8px;
}
.radio {
  display: flex;
  align-items: center;
  gap: 5px;
  height: 20px;
  white-space: nowrap;
}
.radio i {
  display: flex;
  align-items: center;
  justify-content: center;
  width: 13px;
  height: 13px;
  box-sizing: border-box;
  border: 1px solid #666;
  border-radius: 50%;
  background: #fff;
}
.radio.on i::after {
  content: "";
  width: 7px;
  height: 7px;
  border-radius: 50%;
  background: #222;
}
.f-label {
  margin-top: -2px;
  white-space: nowrap;
}
.box {
  box-sizing: border-box;
  border: 1px solid #6a6a6a;
  background: #fff;
}
.comment {
  display: flex;
  justify-content: flex-end;
  padding: 1px;
}
.supported {
  padding: 3px 5px;
  background: #f0f0f0;
  white-space: nowrap;
  overflow: hidden;
  line-height: 15px;
}
.site-labels {
  display: grid;
  grid-template-columns: 306px 1fr;
  margin-top: 13px;
  padding-left: 4px;
}
.site-panels {
  display: flex;
  height: 320px;
  margin: 20px 0 0 2px;
}
.options {
  display: flex;
  align-items: flex-start;
  width: 298px;
  padding: 8px 0 0 5px;
  white-space: nowrap;
}
.show-btn {
  width: 56px;
  margin: -3px 45px 0 auto;
}
.help-text {
  width: 353px;
  margin-left: 8px;
  padding: 2px 0 0 4px;
  overflow: hidden;
  white-space: pre;
  line-height: 15px;
}
.hl {
  height: 15px;
}
.help-bar {
  background: #f8f8f8;
  border-left: 0;
}
.site-foot {
  display: flex;
  justify-content: flex-end;
  gap: 8px;
  margin-top: 15px;
  padding-right: 9px;
}

.cont-body {
  padding: 18px 11px 0;
}
.cont-label {
  margin-left: 3px;
}
.grid {
  display: grid;
  grid-template-columns: 40px 214px 214px;
  grid-template-rows: 18px 22px 22px;
  align-content: start;
  width: 470px;
  height: 218px;
  margin-top: 13px;
  box-sizing: border-box;
  border: 1px solid #000;
  background: #fff;
}
.gh {
  padding-left: 5px;
  border-right: 2px solid #e6e6e6;
  border-bottom: 2px solid #e6e6e6;
  background: #fbfbfb;
  line-height: 20px;
  box-sizing: border-box;
  white-space: nowrap;
}
.rh {
  display: flex;
  align-items: center;
  padding-left: 5px;
  border: 2px solid #e6e6e6;
  border-right: 1px solid #a0a0a0;
  border-bottom-color: #a0a0a0;
  border-bottom-width: 1px;
  background: #f9f9f9;
  box-sizing: border-box;
}
.star {
  width: 5px;
  height: 5px;
  border-radius: 50%;
  background: #666;
}
.gc {
  padding-left: 4px;
  border-right: 1px solid #a0a0a0;
  border-bottom: 1px solid #a0a0a0;
  box-sizing: border-box;
  line-height: 20px;
}
.gc.on {
  background: #3399ff;
  color: #fff;
}
.cont-foot {
  display: flex;
  justify-content: flex-end;
  gap: 8px;
  margin-top: 10px;
  padding-right: 4px;
}
.size-grip {
  position: absolute;
  right: 1px;
  bottom: 1px;
}
</style>
